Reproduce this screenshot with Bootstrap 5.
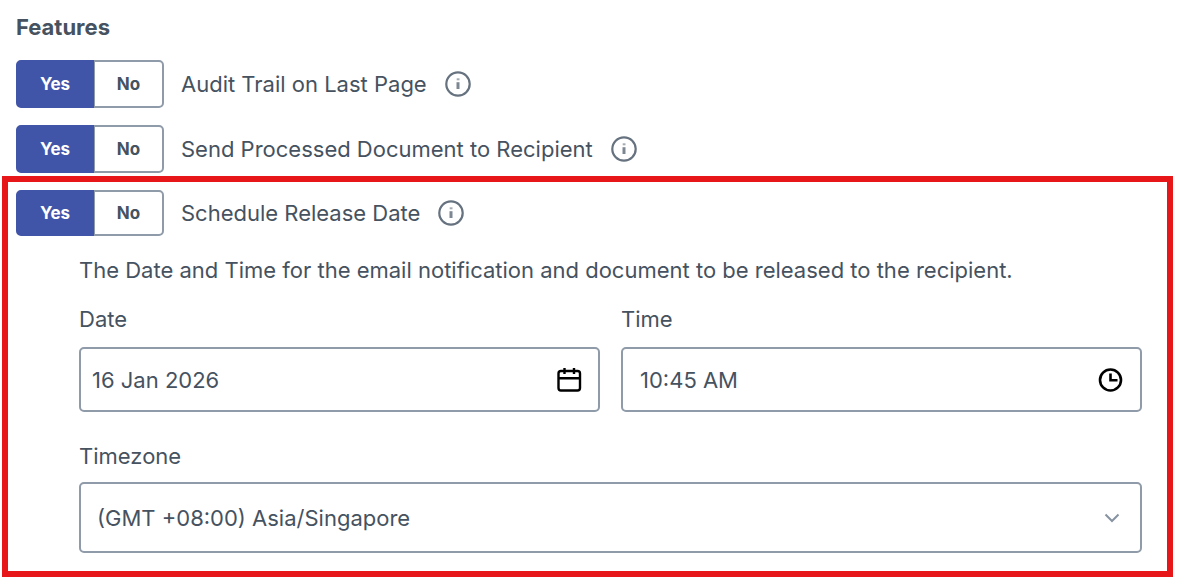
<!DOCTYPE html>
<html lang="en">
<head>
<meta charset="utf-8">
<meta name="viewport" content="width=device-width, initial-scale=1">
<title>Features</title>
<link href="https://cdn.jsdelivr.net/npm/bootstrap@5.3.0/dist/css/bootstrap.min.css" rel="stylesheet">
<style>
  :root { --ink: #465260; --line: #8f9ba8; --brand: #4054a8; --alert: #e71618; }
  body { font-family: Inter, "Liberation Sans", sans-serif; font-size: 22px; line-height: 28px; color: var(--ink); background: #fff; }
  .page { padding: 13px 27px 7px 2px; }
  .title { font-size: 22px; line-height: 28px; font-weight: 700; margin: 0 0 19px 14px; }
  .feature-list { display: grid; gap: 17px; margin: 0 0 3px 14px; }
  .feature { display: flex; align-items: center; gap: 17px; }
  .yes-no { width: 148px; height: 48px; flex: none; }
  .yes-no .btn { --bs-btn-color: var(--ink); --bs-btn-bg: #fff; --bs-btn-border-color: var(--line); --bs-btn-border-radius: 5px;
    --bs-btn-active-bg: var(--brand); --bs-btn-active-border-color: var(--brand); --bs-btn-active-color: #fff;
    --bs-btn-hover-bg: #eef0f8; --bs-btn-hover-color: var(--ink); --bs-btn-hover-border-color: var(--line);
    border-width: 2px; font-size: 17px; line-height: 24px; font-weight: 700; padding: 10px 0; }
  .yes-no .btn:first-of-type { flex: 0 0 78px; }
  .info { display: block; width: 28px; height: 28px; padding: 0; border: 0; background: none; color: #66727f; }
  .info svg, .pick svg { display: block; }
  .highlight { border: 6px solid var(--alert); padding: 8px 25px 18px 8px; }
  .highlight .yes-no { height: 46px; }
  .highlight .yes-no .btn { padding: 9px 0; }
  .details { margin: 20px 0 0 63px; }
  .field-label { display: block; margin-bottom: 14px; }
  .pair { display: grid; grid-template-columns: 1fr 1fr; gap: 21px; margin: 21px 0 30px; }
  .field { display: flex; align-items: center; height: 65px; border: 2px solid var(--line); border-radius: 5px; padding: 0 16px 0 11px; }
  .field.time { padding-left: 17px; }
  .field .form-control { border: 0; padding: 0; font-size: 22px; line-height: 28px; color: var(--ink); background: none; box-shadow: none; }
  .field:focus-within { border-color: var(--brand); }
  .pick { flex: none; border: 0; padding: 0; background: none; color: #000; }
  .zone-label { display: block; margin-bottom: 12px; }
  .zone.form-select { height: 71px; border: 2px solid var(--line); border-radius: 5px; padding: 0 48px 0 16px; font-size: 22px; line-height: 28px; color: var(--ink);
    background-image: url("data:image/svg+xml,%3csvg xmlns='http://www.w3.org/2000/svg' viewBox='0 0 16 16'%3e%3cpath fill='none' stroke='%238693a1' stroke-width='2' d='M1.500 4.500 8 11l6.500-6.500'/%3e%3c/svg%3e");
    background-size: 16px 16px; background-position: right 20px center; }
</style>
</head>
<body>
<svg class="d-none" aria-hidden="true">
  <symbol id="info-icon" viewBox="0 0 28 28">
    <circle cx="14" cy="14" r="11.700" fill="none" stroke="currentColor" stroke-width="2.200"/>
    <path d="M12.700 8.300h2.800v2h-2.800z" fill="currentColor" opacity=".6"/>
    <path d="M12.500 12.200h3V19h-3z" fill="currentColor" opacity=".85"/>
  </symbol>
</svg>
<main class="page">
  <h1 class="title">Features</h1>
  <div class="feature-list">
    <div class="feature">
      <div class="btn-group yes-no" role="group" aria-labelledby="audit-name">
        <input class="btn-check" type="radio" name="audit" id="audit-yes" checked><label class="btn" for="audit-yes">Yes</label>
        <input class="btn-check" type="radio" name="audit" id="audit-no"><label class="btn" for="audit-no">No</label>
      </div>
      <span id="audit-name">Audit Trail on Last Page</span>
      <button type="button" class="info" aria-label="About the audit trail"><svg width="28" height="28"><use href="#info-icon"/></svg></button>
    </div>
    <div class="feature">
      <div class="btn-group yes-no" role="group" aria-labelledby="send-name">
        <input class="btn-check" type="radio" name="send" id="send-yes" checked><label class="btn" for="send-yes">Yes</label>
        <input class="btn-check" type="radio" name="send" id="send-no"><label class="btn" for="send-no">No</label>
      </div>
      <span id="send-name">Send Processed Document to Recipient</span>
      <button type="button" class="info" aria-label="About sending the document"><svg width="28" height="28"><use href="#info-icon"/></svg></button>
    </div>
  </div>
  <section class="highlight">
    <div class="feature">
      <div class="btn-group yes-no" role="group" aria-labelledby="schedule-name">
        <input class="btn-check" type="radio" name="schedule" id="schedule-yes" checked><label class="btn" for="schedule-yes">Yes</label>
        <input class="btn-check" type="radio" name="schedule" id="schedule-no"><label class="btn" for="schedule-no">No</label>
      </div>
      <span id="schedule-name">Schedule Release Date</span>
      <button type="button" class="info" aria-label="About the release date"><svg width="28" height="28"><use href="#info-icon"/></svg></button>
    </div>
    <div class="details">
      <p class="m-0">The Date and Time for the email notification and document to be released to the recipient.</p>
      <div class="pair">
        <div>
          <label class="field-label" for="date">Date</label>
          <div class="field">
            <input class="form-control" type="text" id="date" value="16 Jan 2026">
            <button type="button" class="pick" aria-label="Choose a date">
              <svg width="26" height="26" viewBox="0 0 26 26" fill="none" stroke="currentColor" stroke-width="2.400"><rect x="2.500" y="4" width="21.500" height="19.500" rx="2.500"/><path d="M2.500 11.200H24M8.500 1v6M18 1v6"/></svg>
            </button>
          </div>
        </div>
        <div>
          <label class="field-label" for="time">Time</label>
          <div class="field time">
            <input class="form-control" type="text" id="time" value="10:45 AM">
            <button type="button" class="pick" aria-label="Choose a time">
              <svg width="26" height="26" viewBox="0 0 26 26" fill="none" stroke="currentColor" stroke-width="2.600"><circle cx="12.500" cy="13" r="10.500"/><path d="M12.500 6.500V13.300H19.500"/></svg>
            </button>
          </div>
        </div>
      </div>
      <label class="zone-label" for="zone">Timezone</label>
      <select class="form-select zone" id="zone"><option>(GMT +08:00) Asia/Singapore</option></select>
    </div>
  </section>
</main>
<script src="https://cdn.jsdelivr.net/npm/bootstrap@5.3.0/dist/js/bootstrap.bundle.min.js"></script>
</body>
</html>
